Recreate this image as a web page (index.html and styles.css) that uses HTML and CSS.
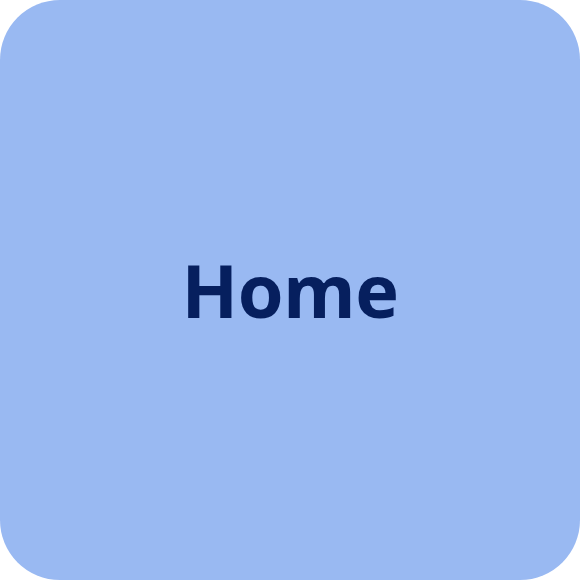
FILE: index.html
```html
<!DOCTYPE html>
<html>
<head>
<meta charset="utf-8">
<link rel="stylesheet" href="styles.css">
</head>
<body>
<div class="tile"><span class="label">Home</span></div>
</body>
</html>
```
FILE: styles.css
```css
html, body { margin: 0; padding: 0; background: #ffffff; }
.tile {
  width: 580px;
  height: 580px;
  border-radius: 60px;
  background: #99b9f2;
  display: flex;
  align-items: center;
  justify-content: center;
}
.label {
  font-family: "Open Sans", "Noto Sans", sans-serif;
  font-weight: 740;
  font-size: 74px;
  color: #061f5e;
  line-height: 1;
  letter-spacing: -0.5px;
}
```
